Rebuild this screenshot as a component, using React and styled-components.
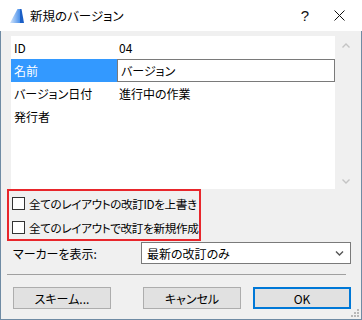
import React from "react";
import styled, { createGlobalStyle } from "styled-components";

const Global = createGlobalStyle`
  html, body { margin: 0; padding: 0; background: #f0f0f0; }
  body {
    font-family: "Noto Sans CJK JP", "Noto Sans", sans-serif;
    font-size: 12px;
    font-feature-settings: "palt";
    color: #000;
  }
  * { box-sizing: border-box; }
`;

const Window = styled.div`
  width: 362px;
  height: 320px;
  display: flex;
  flex-direction: column;
  background: #f0f0f0;
`;

const TitleBar = styled.div`
  height: 31px;
  flex: none;
  background: #fff;
  display: flex;
  align-items: center;
  padding-left: 9px;
`;

const TitleText = styled.span`
  margin-left: 5px;
  font-size: 12.5px;
  flex: 1;
`;

const HelpButton = styled.span`
  width: 22px;
  text-align: center;
  font-family: "Liberation Sans", sans-serif;
  font-size: 15px;
  color: #111;
  line-height: 1;
`;

const CloseButton = styled.span`
  width: 46px;
  display: flex;
  justify-content: center;
  align-items: center;
`;

const Body = styled.div`
  flex: 1;
  position: relative;
  border: 1px solid #6f8ba4;
  border-top: none;
  padding: 5px 9px 0 10px;
  display: flex;
  flex-direction: column;
`;

const ListArea = styled.div`
  display: flex;
  height: 153px;
`;

const ListBox = styled.div`
  width: 324px;
  background: #fff;
`;

const ScrollBar = styled.div`
  width: 17px;
  display: flex;
  flex-direction: column;
  justify-content: space-between;
  align-items: center;
  padding: 7px 0 5px 4px;
`;

const Row = styled.div`
  display: flex;
  height: 23px;
  align-items: stretch;
`;

const Label = styled.div`
  width: 106px;
  padding-left: 3px;
  display: flex;
  align-items: center;
  white-space: nowrap;
  background: ${(p) => (p.$selected ? "#3399ff" : "transparent")};
  color: ${(p) => (p.$selected ? "#fff" : "#000")};
`;

const Value = styled.div`
  flex: 1;
  display: flex;
  align-items: center;
  padding-left: ${(p) => (p.$editing ? 3 : 2)}px;
  border: ${(p) => (p.$editing ? "1px solid #7a7a7a" : "none")};
`;

const Highlight = styled.div`
  margin: 0 0 0 -4px;
  width: 194px;
  height: 52px;
  border: 2px solid #e8262b;
  display: flex;
  flex-direction: column;
  padding: 6px 0 0 3px;
  gap: 11px;
`;

const CheckRow = styled.label`
  display: flex;
  align-items: center;
  height: 13px;
  gap: 4px;
  white-space: nowrap;
  font-size: 11.6px;
  letter-spacing: -0.35px;
`;

const Box = styled.span`
  width: 13px;
  height: 13px;
  border: 1px solid #333;
  background: #fff;
  flex: none;
`;

const MarkerRow = styled.div`
  display: flex;
  align-items: center;
  height: 22px;
  margin-top: 1px;
`;

const MarkerLabel = styled.div`
  width: 130px;
  padding-left: 2px;
`;

const Select = styled.div`
  width: 210px;
  height: 22px;
  border: 1px solid #7a7a7a;
  background: #fff;
  display: flex;
  align-items: center;
  justify-content: space-between;
  padding: 0 6px 0 5px;
`;

const Separator = styled.div`
  height: 1px;
  background: #a0a0a0;
  margin: 10px 6px 0 -4px;
`;

const Buttons = styled.div`
  display: flex;
  margin-top: 12px;
  padding-left: 1px;
`;

const Button = styled.div`
  width: 98px;
  height: 22px;
  display: flex;
  align-items: center;
  justify-content: center;
  background: #e1e1e1;
  border: ${(p) => (p.$default ? "2px solid #0078d7" : "1px solid #adadad")};
  margin-left: ${(p) => p.$gap}px;
`;

const Grip = styled.svg`
  position: absolute;
  right: 2px;
  bottom: 2px;
`;

const AppIcon = () => (
  <svg width="16" height="16" viewBox="0 0 16 16">
    <defs>
      <linearGradient id="g" x1="0" y1="0" x2="1" y2="0">
        <stop offset="0" stopColor="#d6e7fc" />
        <stop offset="1" stopColor="#4a90ea" />
      </linearGradient>
    </defs>
    <path d="M1 15 L8.5 1 L11 1 L11 15 Z" fill="url(#g)" />
    <path d="M11 1 L12.5 1 L15 15 L11 15 Z" fill="#1b5fc6" />
  </svg>
);

const CloseIcon = () => (
  <svg width="11" height="11" viewBox="0 0 11 11">
    <path d="M0.5 0.5 L10.5 10.5 M10.5 0.5 L0.5 10.5" stroke="#111" strokeWidth="1" />
  </svg>
);

const Chevron = ({ up, color = "#c4c4c4", w = 8 }) => (
  <svg width={w} height="5" viewBox="0 0 8 5">
    <path
      d={up ? "M0.5 4.5 L4 1 L7.5 4.5" : "M0.5 0.5 L4 4 L7.5 0.5"}
      fill="none"
      stroke={color}
      strokeWidth="1.4"
    />
  </svg>
);

export default function App() {
  return (
    <>
      <Global />
      <Window>
        <TitleBar>
          <AppIcon />
          <TitleText>新規のバージョン</TitleText>
          <HelpButton>?</HelpButton>
          <CloseButton>
            <CloseIcon />
          </CloseButton>
        </TitleBar>
        <Body>
          <ListArea>
            <ListBox>
              <Row>
                <Label>ID</Label>
                <Value>04</Value>
              </Row>
              <Row>
                <Label $selected>名前</Label>
                <Value $editing>バージョン</Value>
              </Row>
              <Row>
                <Label>バージョン日付</Label>
                <Value>進行中の作業</Value>
              </Row>
              <Row>
                <Label>発行者</Label>
                <Value />
              </Row>
            </ListBox>
            <ScrollBar>
              <Chevron up />
              <Chevron />
            </ScrollBar>
          </ListArea>
          <Highlight>
            <CheckRow>
              <Box />
              全てのレイアウトの改訂IDを上書き
            </CheckRow>
            <CheckRow>
              <Box />
              全てのレイアウトで改訂を新規作成
            </CheckRow>
          </Highlight>
          <MarkerRow>
            <MarkerLabel>マーカーを表示:</MarkerLabel>
            <Select>
              <span>最新の改訂のみ</span>
              <Chevron color="#555" w={9} />
            </Select>
          </MarkerRow>
          <Separator />
          <Buttons>
            <Button $gap={1}>スキーム...</Button>
            <Button $gap={32}>キャンセル</Button>
            <Button $gap={12} $default>OK</Button>
          </Buttons>
          <Grip width="9" height="9" viewBox="0 0 9 9">
            {[
              [7, 1], [4, 4], [7, 4], [1, 7], [4, 7], [7, 7],
            ].map(([x, y]) => (
              <rect key={x + "-" + y} x={x} y={y} width="2" height="2" fill="#b8b8b8" />
            ))}
          </Grip>
        </Body>
      </Window>
    </>
  );
}
